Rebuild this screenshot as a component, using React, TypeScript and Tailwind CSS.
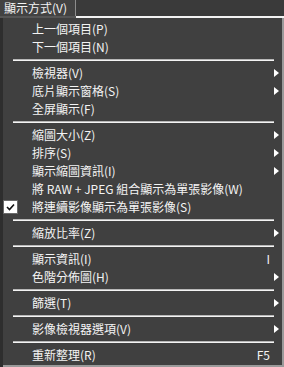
import React from "react";

type Item =
  | { type: "sep" }
  | { type: "item"; label: string; arrow?: boolean; shortcut?: string; checked?: boolean };

const items: Item[] = [
  { type: "item", label: "上一個項目(P)" },
  { type: "item", label: "下一個項目(N)" },
  { type: "sep" },
  { type: "item", label: "檢視器(V)", arrow: true },
  { type: "item", label: "底片顯示窗格(S)", arrow: true },
  { type: "item", label: "全屏顯示(F)" },
  { type: "sep" },
  { type: "item", label: "縮圖大小(Z)", arrow: true },
  { type: "item", label: "排序(S)", arrow: true },
  { type: "item", label: "顯示縮圖資訊(I)", arrow: true },
  { type: "item", label: "將 RAW + JPEG 組合顯示為單張影像(W)" },
  { type: "item", label: "將連續影像顯示為單張影像(S)", checked: true },
  { type: "sep" },
  { type: "item", label: "縮放比率(Z)", arrow: true },
  { type: "sep" },
  { type: "item", label: "顯示資訊(I)", shortcut: "I" },
  { type: "item", label: "色階分佈圖(H)", arrow: true },
  { type: "sep" },
  { type: "item", label: "篩選(T)", arrow: true },
  { type: "sep" },
  { type: "item", label: "影像檢視器選項(V)", arrow: true },
  { type: "sep" },
  { type: "item", label: "重新整理(R)", shortcut: "F5" },
];

function Arrow() {
  return (
    <svg width="5" height="8" viewBox="0 0 5 8" className="block">
      <path d="M0 0 L5 4 L0 8 Z" fill="#ffffff" />
    </svg>
  );
}

function Check() {
  return (
    <div className="w-[15px] h-[14px] bg-white border border-[#6a6a6a] flex items-center justify-center">
      <svg width="9" height="8" viewBox="0 0 9 8">
        <path d="M1 4 L3.5 6.5 L8 1.5" stroke="#111" strokeWidth="1.6" fill="none" />
      </svg>
    </div>
  );
}

export default function App() {
  return (
    <div
      className="w-[284px] h-[367px] bg-[#3a3a3a] text-[12px] text-[#f4f4f4] flex flex-col overflow-hidden"
      style={{ fontFamily: '"Noto Sans CJK TC", "Noto Sans", sans-serif' }}
    >
      <div className="h-[16px] flex shrink-0">
        <div className="w-[76px] h-full bg-[#424242] border-r border-[#8c8c8c] pl-[4px] leading-[16px]">
          顯示方式(V)
        </div>
      </div>
      <div className="flex-1 flex flex-col bg-[#2e2e2e]">
        <div className="flex h-[2px] shrink-0">
          <div className="w-[76px] bg-[#555555]" />
          <div className="flex-1 bg-[#f2f2f2]" />
        </div>
        <div className="flex-1 flex ml-[3px] mb-[2px] bg-[#404040] border-r-[2px] border-[#9a9a9a] pt-[2px] flex-col">
          {items.map((it, i) =>
            it.type === "sep" ? (
              <div key={i} className="h-[8px] flex items-center pl-[10px] pr-[8px]">
                <div className="w-full h-[2px] border-t border-[#b8b8b8] bg-[#f4f4f4]" />
              </div>
            ) : (
              <div key={i} className="h-[18px] flex items-center relative leading-[18px]">
                {it.checked && (
                  <div className="absolute left-0 top-[2px]">
                    <Check />
                  </div>
                )}
                <span className="pl-[29px] whitespace-nowrap">{it.label}</span>
                <div className="flex-1" />
                {it.shortcut && <span className="pr-[12px]">{it.shortcut}</span>}
                {it.arrow && (
                  <div className="pr-[3px]">
                    <Arrow />
                  </div>
                )}
              </div>
            )
          )}
        </div>
        <div className="h-[2px] bg-[#9a9a9a] shrink-0 -mt-[2px] ml-[3px]" />
      </div>
    </div>
  );
}
